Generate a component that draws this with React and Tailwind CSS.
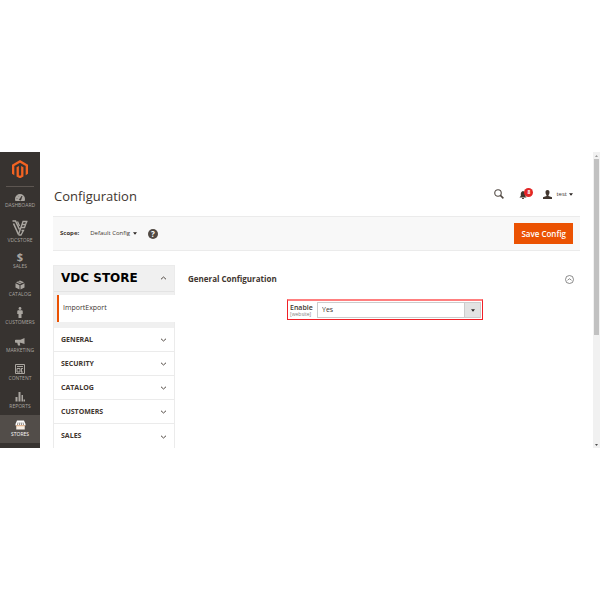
import React from "react";

const ICONS = {
  dashboard: (
    <svg viewBox="0 0 20 14" className="h-[7px] w-[10px]" fill="currentColor">
      <path d="M10 0A10 10 0 0 0 0 10c0 1.500.3 2.800.8 4h18.400c.5-1.200.8-2.500.8-4A10 10 0 0 0 10 0z" />
      <path d="M8.500 11.500 14 4l-2.500 8.500z" stroke="#373330" strokeWidth="1.200" fill="#373330" />
      <path d="M3 9h2M6 3.500l1.200 1.400" stroke="#373330" strokeWidth="1" />
    </svg>
  ),
  vdc: (
    <svg viewBox="0 0 32 32" className="h-4 w-4" fill="none" stroke="currentColor">
      <path d="M1 2h6l8 17M3 7l10 22" strokeWidth="3.200" />
      <path d="M11 3l4 9M31 3h-9l-9 26M29 4l-4 11h-6M21 9h6" strokeWidth="2.600" />
      <path d="M19 21h4l-5 9h-5" strokeWidth="2.600" />
    </svg>
  ),
  catalog: (
    <svg viewBox="0 0 20 20" className="h-[10px] w-[10px]" fill="currentColor">
      <path d="M10 1 18 4.500 10 8.500 2 4.500zM1 6.500l8 4V19l-8-4zM19 6.500l-8 4V19l8-4z" />
      <path d="m5.500 3 8 3.800V10" stroke="#373330" strokeWidth="1.200" fill="none" />
    </svg>
  ),
  customers: (
    <svg viewBox="0 0 12 22" className="h-[11px] w-[6px]" fill="currentColor">
      <circle cx="6" cy="3" r="2.800" />
      <path d="M3 6.500h6c1.700 0 2.500 1 2.500 2.500v5H9v8H3v-8H.5V9c0-1.500.8-2.500 2.500-2.500z" />
    </svg>
  ),
  marketing: (
    <svg viewBox="0 0 20 16" className="h-2 w-[10px]" fill="currentColor">
      <path d="M19 0v12L11 9.500H9.500l1 5.500H6L4.500 9.500H1v-6h10zM0 4h1v5H0z" />
    </svg>
  ),
  content: (
    <svg viewBox="0 0 20 20" className="h-[10px] w-[10px]" fill="none" stroke="currentColor" strokeWidth="2">
      <path d="M1 1h18v18H1zM4 5h12" />
      <path d="M4 9h6v7H4zM13 8v9M16 9h-3M16 16h-3" />
    </svg>
  ),
  reports: (
    <svg viewBox="0 0 20 20" className="h-[10px] w-[10px]" fill="currentColor">
      <path d="M1 10h4v9H1zM7 0h4v19H7zM13 6h3v13h-3zM17 15h3v4h-3z" />
    </svg>
  ),
  stores: (
    <svg viewBox="0 0 22 20" className="h-[10px] w-[11px]">
      <path d="M4 1h14l3 7v3H1V8z" fill="#fff" />
      <path d="M2.500 11h17v8h-17z" fill="#f7efe6" />
      <path d="M6 5 5 10M9.500 5 9 10M12.500 5l.5 5M16 5l1 5" stroke="#514943" strokeWidth="1.300" />
      <path d="M2 11.500h18" stroke="#e8a268" strokeWidth="1.500" />
    </svg>
  ),
};

const NAV = [
  { label: "DASHBOARD", icon: "dashboard", box: "h-[26px]" },
  { label: "VDCSTORE", icon: "vdc", box: "h-[35px]" },
  { label: "SALES", icon: "sales", box: "h-[26px]" },
  { label: "CATALOG", icon: "catalog", box: "h-7" },
  { label: "CUSTOMERS", icon: "customers", box: "h-7" },
  { label: "MARKETING", icon: "marketing", box: "h-7" },
  { label: "CONTENT", icon: "content", box: "h-7" },
  { label: "REPORTS", icon: "reports", box: "h-7" },
  { label: "STORES", icon: "stores", box: "h-7", active: true },
];

const TABS = ["GENERAL", "SECURITY", "CATALOG", "CUSTOMERS", "SALES"];

function Chevron({ up }) {
  return (
    <svg viewBox="0 0 14 8" className="h-1 w-[7px]" fill="none" stroke="#514943" strokeWidth="2">
      <path d={up ? "M2 6.500 7 2l5 4.500" : "M2 1.500 7 6l5-4.500"} />
    </svg>
  );
}

function Caret() {
  return (
    <svg viewBox="0 0 8 5" className="h-[3px] w-1" fill="#2a2522">
      <path d="M0 0h8L4 5z" />
    </svg>
  );
}

function Sidebar() {
  return (
    <nav className="flex w-10 shrink-0 flex-col bg-[#373330] text-[#aaa6a0]">
      <a href="#home" aria-label="Magento" className="mx-[6px] flex h-[35px] items-center justify-center border-b border-[#5d5651]">
        <svg viewBox="0 0 34 38" className="h-[18px] w-4" fill="#f26322">
          <path d="M17 0 0 9.800v19.500l4.900 2.800V12.600L17 5.600l12.100 7v19.500l4.900-2.800V9.800z" />
          <path d="M19.400 32.100 17 33.500l-2.400-1.400V12.600l-4.900 2.800v19.500L17 39l7.300-4.100V15.400l-4.900-2.800z" />
        </svg>
      </a>
      <div className="flex flex-col pt-px">
        {NAV.map((n) => (
          <a
            key={n.label}
            href={"#" + n.label.toLowerCase()}
            className={
              "flex flex-col items-center justify-end gap-px pb-[6px] " + n.box + (n.active ? " bg-[#524d49] text-white" : "")
            }
          >
            <span className="flex min-h-[7px] items-center justify-center">
              {n.icon === "sales" ? <b className="text-[11px] leading-[11px]">$</b> : ICONS[n.icon]}
            </span>
            <span className="text-[5px] leading-[6px]">{n.label}</span>
          </a>
        ))}
      </div>
    </nav>
  );
}

function PageHeader() {
  return (
    <header className="flex h-16 items-center justify-between pt-6 pr-[7px] pl-px">
      <h1 className="text-[13px] leading-4 text-[#41362f]">Configuration</h1>
      <div className="flex items-center pb-1 text-[#41362f]">
        <button aria-label="Search">
          <svg viewBox="0 0 20 20" className="h-[10px] w-[10px]" fill="none" stroke="#514943" strokeWidth="2.200">
            <circle cx="8" cy="8" r="6.500" />
            <path d="m12.800 12.800 6 6" strokeWidth="3" />
          </svg>
        </button>
        <button aria-label="Notifications" className="relative ml-[15px] h-[10px] w-[15px]">
          <svg viewBox="0 0 16 18" className="mt-[2px] h-2 w-2" fill="#41362f">
            <path d="M8 0C4.500 1 3 3.500 3 7v4l-3 3.500h16L13 11V7c0-3.500-1.500-6-5-7zM6 15.500h4V18H6z" />
          </svg>
          <span className="absolute -top-px left-[5px] flex h-[9px] w-[9px] items-center justify-center rounded-full bg-[#e22626] text-[5px] font-bold text-white">8</span>
        </button>
        <button className="ml-[9px] flex items-center text-[6px] leading-2">
          <svg viewBox="0 0 18 18" className="h-[9px] w-[9px]" fill="#41362f">
            <path d="M9 0c2.500 0 4 1.800 4 4.500S11.500 10 11 10.500v1.500l7 2.500V18H0v-3.500L7 12v-1.500C6.500 10 5 7.200 5 4.500S6.500 0 9 0z" />
          </svg>
          <span className="mr-[2px] ml-[4px]">test</span>
          <Caret />
        </button>
      </div>
    </header>
  );
}

function ScopeBar() {
  return (
    <div className="flex h-[35px] items-center border-y border-[#ebebeb] bg-[#f8f8f8] px-[7px]">
      <span className="text-[6px] font-bold text-[#41362f]">Scope:</span>
      <button className="ml-[11px] flex items-center gap-[3px] text-[6px] text-[#41362f]">
        Default Config
        <Caret />
      </button>
      <button aria-label="Help" className="ml-[11px] flex h-[10px] w-[10px] items-center justify-center rounded-full bg-[#514943] text-[8px] font-bold leading-none text-white">
        ?
      </button>
      <button className="ml-auto h-[21px] bg-[#eb5202] px-[7px] text-[8px] font-semibold text-white">Save Config</button>
    </div>
  );
}

function ConfigTabs() {
  return (
    <aside className="w-[122px] shrink-0 border-x border-t border-[#ebebeb]">
      <button className="flex h-[26px] w-full items-center justify-between border-b border-[#e3e3e3] bg-[#f0f0f0] pr-[7px] pb-[2px] pl-[7px]">
        <span className="font-['DejaVu_Sans',sans-serif] text-[12px] font-bold leading-3 text-black">VDC STORE</span>
        <Chevron up />
      </button>
      <div className="bg-[#f0f0f0] pt-[3px] pb-[6px] pl-[3px]">
        <a href="#importexport" className="-mr-px flex h-[27px] items-center border-l-2 border-[#eb5202] bg-white pl-1 text-[7px] font-medium text-[#41362f]">
          ImportExport
        </a>
      </div>
      {TABS.map((t) => (
        <button key={t} className="flex h-6 w-full items-center justify-between border-b border-[#ebebeb] pt-px pr-[7px] pl-[7px] text-[7px] font-bold text-[#41362f] last:border-b-0">
          {t}
          <Chevron />
        </button>
      ))}
    </aside>
  );
}

function GeneralSection() {
  return (
    <section className="min-w-0 flex-1 pl-[13px]">
      <div className="flex h-7 items-center justify-between pr-[6px]">
        <h2 className="text-[8px] font-bold text-[#41362f]">General Configuration</h2>
        <button aria-label="Collapse section">
          <svg viewBox="0 0 18 18" className="h-[9px] w-[9px]" fill="none" stroke="#666" strokeWidth="1.500">
            <circle cx="9" cy="9" r="8" />
            <path d="m5 10.500 4-3 4 3" />
          </svg>
        </button>
      </div>
      <div className="mt-[6px] mr-[97px] ml-[99px] flex h-[21px] items-center border border-t-2 border-[#f02027] border-t-[#ff7f7f] pr-px pl-[2px]">
        <label htmlFor="enable" className="w-[27px] shrink-0">
          <span className="block text-[7px] font-semibold leading-[7px] text-[#41362f]">Enable</span>
          <span className="block text-[5px] leading-[6px] text-[#808080]">[website]</span>
        </label>
        <div className="relative flex-1">
          <select id="enable" className="block h-4 w-full appearance-none border border-[#ccc] bg-white pl-1 text-[7px] text-[#41362f]">
            <option>Yes</option>
            <option>No</option>
          </select>
          <span className="pointer-events-none absolute inset-y-0 right-0 flex w-[17px] items-center justify-center border border-[#ccc] bg-[#e3e3e3]">
            <Caret />
          </span>
        </div>
      </div>
    </section>
  );
}

function Scrollbar() {
  return (
    <div className="flex w-[7px] shrink-0 flex-col items-center bg-[#f1f1f1]" aria-hidden="true">
      <div className="flex h-[7px] items-center">
        <svg viewBox="0 0 8 5" className="h-[2px] w-[3px]" fill="#999"><path d="M0 5h8L4 0z" /></svg>
      </div>
      <div className="w-[5px] grow-5 bg-[#c1c1c1]" />
      <div className="grow-3" />
      <div className="flex h-[7px] items-center">
        <svg viewBox="0 0 8 5" className="h-[2px] w-[3px]" fill="#505050"><path d="M0 0h8L4 5z" /></svg>
      </div>
    </div>
  );
}

export default function App() {
  return (
    <div className="flex min-h-screen items-center bg-white font-['Open_Sans',sans-serif]">
      <div className="flex w-full">
        <Sidebar />
        <main className="min-w-0 flex-1 px-[13px]">
          <PageHeader />
          <ScopeBar />
          <div className="mt-[14px] flex">
            <ConfigTabs />
            <GeneralSection />
          </div>
        </main>
        <Scrollbar />
      </div>
    </div>
  );
}
